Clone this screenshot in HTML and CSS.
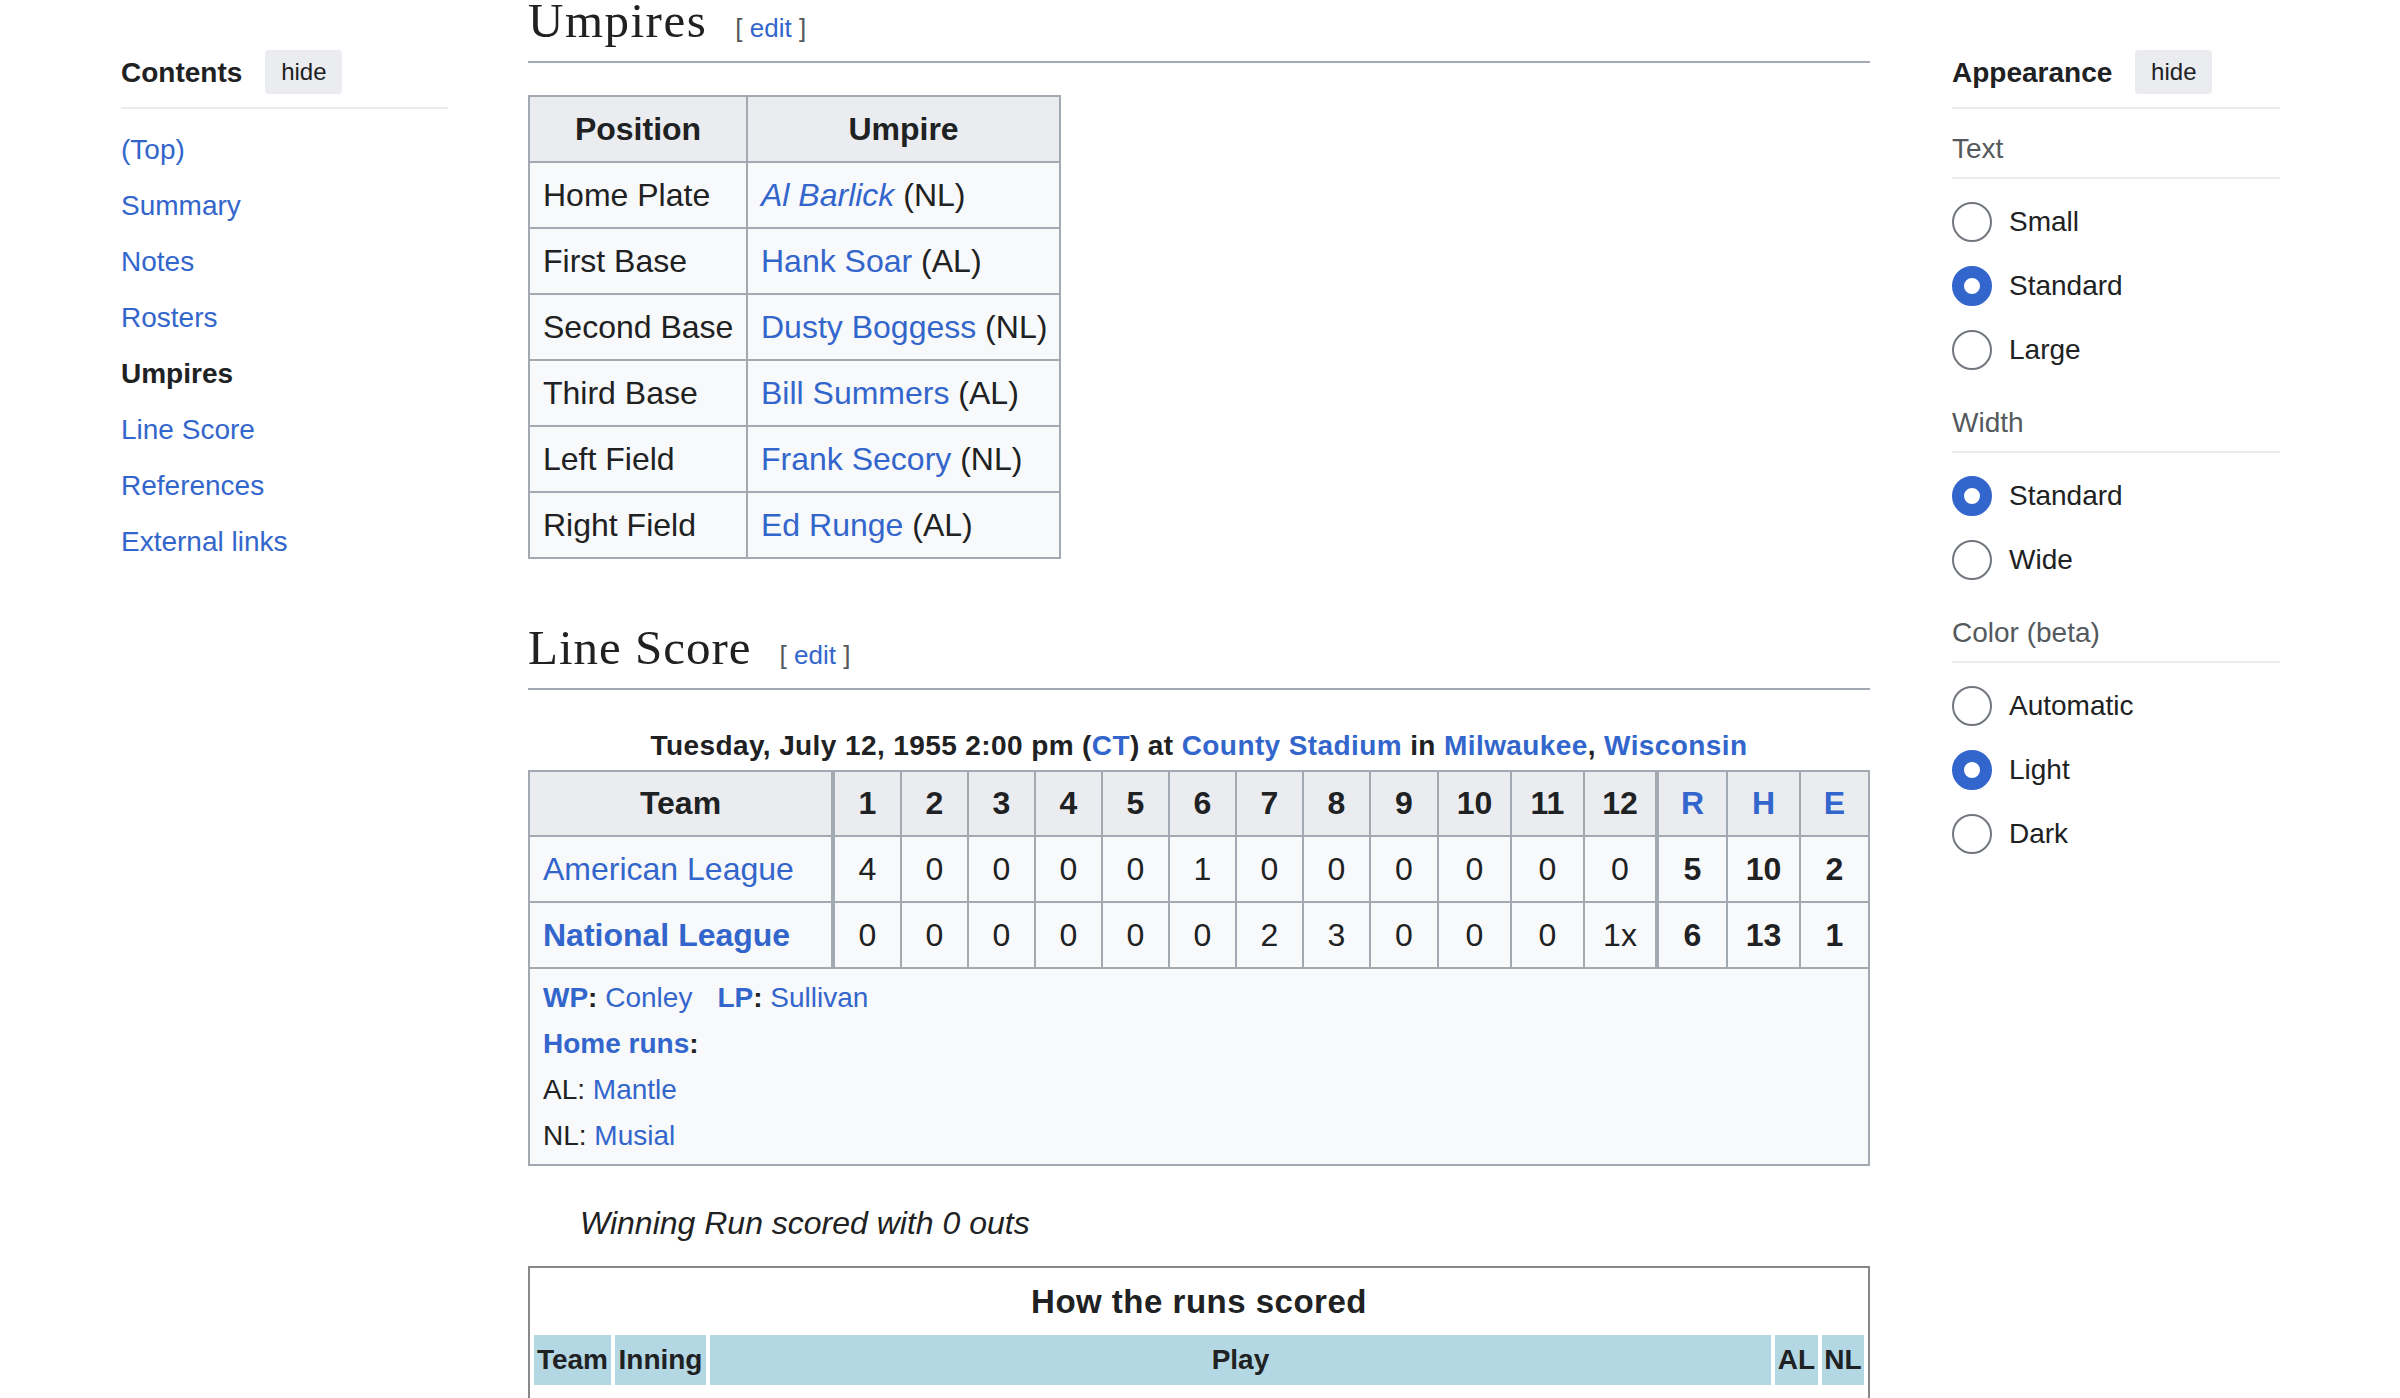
FILE: index.html
```html
<!DOCTYPE html>
<html lang="en">
<head>
<meta charset="utf-8">
<title>1955 Major League Baseball All-Star Game</title>
<link rel="stylesheet" href="styles.css">
</head>
<body>
<div class="page">
  <nav class="toc">
    <div class="panel-head">
      <span class="panel-title">Contents</span>
      <button class="hide-btn" type="button">hide</button>
    </div>
    <ul class="toc-list">
      <li><a href="#top">(Top)</a></li>
      <li><a href="#summary">Summary</a></li>
      <li><a href="#notes">Notes</a></li>
      <li><a href="#rosters">Rosters</a></li>
      <li class="active">Umpires</li>
      <li><a href="#line-score">Line Score</a></li>
      <li><a href="#references">References</a></li>
      <li><a href="#external">External links</a></li>
    </ul>
  </nav>

  <main class="content">
    <div class="heading scrolled">
      <h2>Umpires</h2>
      <span class="editsection"><span class="br">[</span> <a href="#edit">edit</a> <span class="br">]</span></span>
    </div>

    <table class="wikitable umpires">
      <colgroup><col class="u-pos"><col class="u-ump"></colgroup>
      <tr><th>Position</th><th>Umpire</th></tr>
      <tr><td>Home Plate</td><td><i><a href="#a">Al Barlick</a></i> (NL)</td></tr>
      <tr><td>First Base</td><td><a href="#a">Hank Soar</a> (AL)</td></tr>
      <tr><td>Second Base</td><td><a href="#a">Dusty Boggess</a> (NL)</td></tr>
      <tr><td>Third Base</td><td><a href="#a">Bill Summers</a> (AL)</td></tr>
      <tr><td>Left Field</td><td><a href="#a">Frank Secory</a> (NL)</td></tr>
      <tr><td>Right Field</td><td><a href="#a">Ed Runge</a> (AL)</td></tr>
    </table>

    <div class="heading section">
      <h2>Line Score</h2>
      <span class="editsection"><span class="br">[</span> <a href="#edit">edit</a> <span class="br">]</span></span>
    </div>

    <table class="wikitable linescore">
      <caption>Tuesday, July 12, 1955 2:00 pm (<a href="#a">CT</a>) at <a href="#a">County Stadium</a> in <a href="#a">Milwaukee</a>, <a href="#a">Wisconsin</a></caption>
      <colgroup>
        <col class="c-team">
        <col class="c-inn"><col class="c-inn"><col class="c-inn"><col class="c-inn">
        <col class="c-inn"><col class="c-inn"><col class="c-inn"><col class="c-inn">
        <col class="c-9"><col class="c-10"><col class="c-11"><col class="c-12">
        <col class="c-r"><col class="c-h"><col class="c-e">
      </colgroup>
      <tr class="ls-head">
        <th class="team-col">Team</th>
        <th>1</th><th>2</th><th>3</th><th>4</th><th>5</th><th>6</th>
        <th>7</th><th>8</th><th>9</th><th>10</th><th>11</th><th class="sep">12</th>
        <th><a href="#a">R</a></th><th><a href="#a">H</a></th><th><a href="#a">E</a></th>
      </tr>
      <tr class="ls-row">
        <td class="team-col"><a href="#a">American League</a></td>
        <td>4</td><td>0</td><td>0</td><td>0</td><td>0</td><td>1</td>
        <td>0</td><td>0</td><td>0</td><td>0</td><td>0</td><td class="sep">0</td>
        <td class="tot">5</td><td class="tot">10</td><td class="tot">2</td>
      </tr>
      <tr class="ls-row">
        <td class="team-col"><a class="strong" href="#a">National League</a></td>
        <td>0</td><td>0</td><td>0</td><td>0</td><td>0</td><td>0</td>
        <td>2</td><td>3</td><td>0</td><td>0</td><td>0</td><td class="sep">1x</td>
        <td class="tot">6</td><td class="tot">13</td><td class="tot">1</td>
      </tr>
      <tr>
        <td colspan="16" class="ls-summary">
          <div><a class="strong" href="#a">WP</a><b>:</b> <a href="#a">Conley</a><span class="lp"><a class="strong" href="#a">LP</a><b>:</b> <a href="#a">Sullivan</a></span></div>
          <div><a class="strong" href="#a">Home runs</a><b>:</b></div>
          <div>AL: <a href="#a">Mantle</a></div>
          <div>NL: <a href="#a">Musial</a></div>
        </td>
      </tr>
    </table>

    <p class="note"><i>Winning Run scored with 0 outs</i></p>

    <table class="runs">
      <colgroup><col class="r-team"><col class="r-inn"><col><col class="r-al"><col class="r-nl"></colgroup>
      <tr><th colspan="5" class="runs-title">How the runs scored</th></tr>
      <tr class="runs-head"><th>Team</th><th>Inning</th><th>Play</th><th>AL</th><th>NL</th></tr>
      <tr class="runs-row"><td>AL</td><td>1</td><td>Mickey Mantle homered, Harvey Kuenn and Nellie Fox scored</td><td>4</td><td>0</td></tr>
    </table>
  </main>

  <aside class="appearance">
    <div class="panel-head">
      <span class="panel-title">Appearance</span>
      <button class="hide-btn" type="button">hide</button>
    </div>

    <div class="ap-label">Text</div>
    <div class="ap-options">
      <label class="radio-row"><input type="radio" name="text"> Small</label>
      <label class="radio-row"><input type="radio" name="text" checked> Standard</label>
      <label class="radio-row"><input type="radio" name="text"> Large</label>
    </div>

    <div class="ap-label">Width</div>
    <div class="ap-options">
      <label class="radio-row"><input type="radio" name="width" checked> Standard</label>
      <label class="radio-row"><input type="radio" name="width"> Wide</label>
    </div>

    <div class="ap-label">Color (beta)</div>
    <div class="ap-options">
      <label class="radio-row"><input type="radio" name="color"> Automatic</label>
      <label class="radio-row"><input type="radio" name="color" checked> Light</label>
      <label class="radio-row"><input type="radio" name="color"> Dark</label>
    </div>
  </aside>
</div>
</body>
</html>
```

FILE: styles.css
```css
html, body {
  margin: 0;
  padding: 0;
  background: #ffffff;
}

body {
  font-family: "Liberation Sans", Arial, sans-serif;
  color: #202122;
  overflow: hidden;
}

a {
  color: #3366cc;
  text-decoration: none;
}

a.strong {
  font-weight: bold;
}

.page {
  display: flex;
  align-items: flex-start;
  padding-left: 121px;
}

/* ---------- side panels ---------- */
.toc {
  width: 327px;
  flex: none;
}

.appearance {
  width: 328px;
  flex: none;
  margin-left: 82px;
}

.panel-head {
  display: flex;
  align-items: center;
  gap: 23px;
  height: 44px;
  padding-top: 50px;
  padding-bottom: 13px;
  border-bottom: 2px solid #eaecf0;
}

.panel-title {
  font-size: 28px;
  font-weight: bold;
  line-height: 42px;
  padding-top: 2px;
}

.hide-btn {
  font-family: "Liberation Sans", Arial, sans-serif;
  font-size: 24px;
  color: #202122;
  background: #eaecf0;
  border: none;
  border-radius: 4px;
  width: 77px;
  height: 44px;
  padding: 0;
}

.toc-list {
  list-style: none;
  margin: 13px 0 0;
  padding: 0;
  font-size: 28px;
  line-height: 56px;
}

.toc-list .active {
  font-weight: bold;
}

.ap-label {
  margin-top: 20px;
  font-size: 28px;
  line-height: 40px;
  color: #54595d;
  padding-bottom: 8px;
  border-bottom: 2px solid #eaecf0;
}

.ap-options + .ap-label {
  margin-top: 21px;
}

.ap-options {
  margin-top: 11px;
}

.radio-row {
  display: flex;
  align-items: center;
  gap: 17px;
  height: 64px;
  font-size: 28px;
}

.radio-row input {
  appearance: none;
  -webkit-appearance: none;
  box-sizing: border-box;
  margin: 0;
  width: 40px;
  height: 40px;
  border: 2px solid #72777d;
  border-radius: 50%;
  background: #ffffff;
  flex: none;
}

.radio-row input:checked {
  border: 12px solid #3366cc;
}

/* ---------- main content ---------- */
.content {
  width: 1342px;
  flex: none;
  margin-left: 80px;
}

.heading {
  display: flex;
  align-items: baseline;
  gap: 28px;
  padding-bottom: 8px;
  border-bottom: 2px solid #a2a9b1;
}

.heading.scrolled {
  margin-top: -11.5px;
}

.heading.section {
  margin-top: 57px;
}

.heading h2 {
  margin: 0;
  font-family: "Liberation Serif", "Times New Roman", serif;
  font-weight: normal;
  font-size: 49px;
  line-height: 64px;
  letter-spacing: 1px;
  color: #202122;
}

.heading.scrolled h2 {
  letter-spacing: 1.5px;
}

.editsection {
  font-size: 26px;
  line-height: 30px;
}

.editsection .br {
  color: #54595d;
}

.wikitable {
  border-collapse: separate;
  border-spacing: 0;
  box-sizing: border-box;
  table-layout: fixed;
  border-top: 2px solid #a2a9b1;
  border-left: 2px solid #a2a9b1;
  color: #202122;
  font-size: 32px;
}

.wikitable th,
.wikitable td {
  box-sizing: border-box;
  border-right: 2px solid #a2a9b1;
  border-bottom: 2px solid #a2a9b1;
  padding: 6px 13px;
  line-height: 52px;
  background: #f8f9fa;
  white-space: nowrap;
}

.wikitable th {
  background: #eaecf0;
  font-weight: bold;
  text-align: center;
}

.umpires {
  width: 533px;
  margin-top: 32px;
}

.u-pos { width: 218px; }
.u-ump { width: 313px; }

/* line score */
.linescore {
  width: 1342px;
  margin-top: 0;
}

.linescore caption {
  margin-top: 32px;
  font-size: 28px;
  font-weight: bold;
  line-height: 48px;
  letter-spacing: 0.4px;
  text-align: center;
  white-space: nowrap;
}

.c-team { width: 305px; }
.c-inn { width: 67px; }
.c-9 { width: 68px; }
.c-10 { width: 73px; }
.c-11 { width: 73px; }
.c-12 { width: 74px; }
.c-r { width: 69px; }
.c-h { width: 73px; }
.c-e { width: 69px; }

.linescore th,
.linescore td {
  padding: 6px 2px;
  text-align: center;
}

.linescore .ls-head th {
  line-height: 51px;
}

.linescore .team-col {
  border-right-width: 4px;
}

.linescore td.team-col {
  text-align: left;
  padding-left: 13px;
}

.linescore .sep {
  border-right-width: 4px;
}

.linescore .tot {
  font-weight: bold;
}

.linescore td.ls-summary {
  text-align: left;
  font-size: 28px;
  line-height: 46px;
  padding: 6px 13px 5px;
}

.lp {
  margin-left: 25px;
}

.note {
  margin: 32px 0 0 52px;
  font-size: 32px;
  line-height: 51.2px;
}

/* how the runs scored */
.runs {
  width: 1342px;
  box-sizing: border-box;
  table-layout: fixed;
  margin-top: 17px;
  border: 2px solid #888888;
  border-spacing: 4px;
  font-size: 28px;
  color: #202122;
}

.r-team { width: 77px; }
.r-inn { width: 91px; }
.r-al { width: 43px; }
.r-nl { width: 42px; }

.runs th,
.runs td {
  padding: 2px;
  white-space: nowrap;
  overflow: hidden;
}

.runs .runs-title {
  font-size: 33px;
  line-height: 55px;
  letter-spacing: 0.5px;
  font-weight: bold;
  text-align: center;
}

.runs-head th {
  background: #b3d7e3;
  font-weight: bold;
  line-height: 46px;
  text-align: center;
}

.runs-row td {
  line-height: 46px;
}
```
